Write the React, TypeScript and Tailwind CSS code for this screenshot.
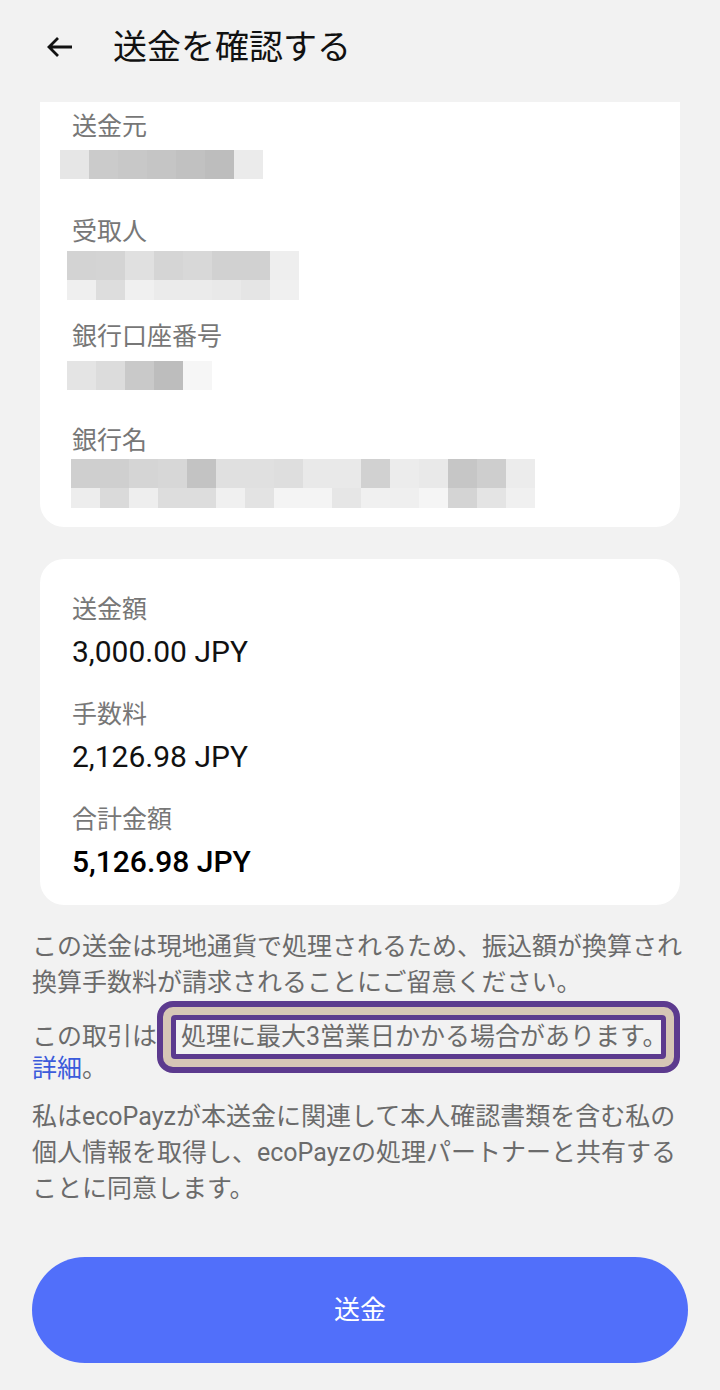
import React from 'react';

type Redaction = { offset: string; gap: string; rows: { h: string; cells: string[] }[] };

const SENDER: Redaction = {
  offset: '-ml-[12px]',
  gap: 'mt-[7px]',
  rows: [
    {
      h: 'h-[29px]',
      cells: ['bg-[#e6e6e6]', 'bg-[#cbcbcb]', 'bg-[#c8c8c8]', 'bg-[#c5c5c5]', 'bg-[#c1c1c1]', 'bg-[#bdbdbd]', 'bg-[#ebebeb]'],
    },
  ],
};

const RECIPIENT: Redaction = {
  offset: '-ml-[5px]',
  gap: 'mt-[3px]',
  rows: [
    {
      h: 'h-[29px]',
      cells: ['bg-[#d3d3d3]', 'bg-[#d4d4d4]', 'bg-[#e0e0e0]', 'bg-[#d5d5d5]', 'bg-[#d8d8d8]', 'bg-[#d1d1d1]', 'bg-[#d1d1d1]', 'bg-[#eeeeee]'],
    },
    {
      h: 'h-[20px]',
      cells: ['bg-[#efefef]', 'bg-[#dddddd]', 'bg-[#f0f0f0]', 'bg-[#ebebeb]', 'bg-[#ebebeb]', 'bg-[#e9e9e9]', 'bg-[#e5e5e5]', 'bg-[#f0f0f0]'],
    },
  ],
};

const ACCOUNT: Redaction = {
  offset: '-ml-[5px]',
  gap: 'mt-[8px]',
  rows: [
    {
      h: 'h-[29px]',
      cells: ['bg-[#e4e4e4]', 'bg-[#dcdcdc]', 'bg-[#c9c9c9]', 'bg-[#bdbdbd]', 'bg-[#f6f6f6]'],
    },
  ],
};

const BANK: Redaction = {
  offset: '-ml-[1px]',
  gap: 'mt-[2px]',
  rows: [
    {
      h: 'h-[29px]',
      cells: [
        'bg-[#cfcfcf]', 'bg-[#cfcfcf]', 'bg-[#d5d5d5]', 'bg-[#d7d7d7]', 'bg-[#c3c3c3]', 'bg-[#e0e0e0]', 'bg-[#e0e0e0]', 'bg-[#dedede]',
        'bg-[#e9e9e9]', 'bg-[#e9e9e9]', 'bg-[#d1d1d1]', 'bg-[#ececec]', 'bg-[#e9e9e9]', 'bg-[#c6c6c6]', 'bg-[#cecece]', 'bg-[#ececec]',
      ],
    },
    {
      h: 'h-[20px]',
      cells: [
        'bg-[#ededed]', 'bg-[#dadada]', 'bg-[#eeeeee]', 'bg-[#dddddd]', 'bg-[#dddddd]', 'bg-[#f0f0f0]', 'bg-[#e3e3e3]', 'bg-[#f4f4f4]',
        'bg-[#f4f4f4]', 'bg-[#e6e6e6]', 'bg-[#f0f0f0]', 'bg-[#efefef]', 'bg-[#f5f5f5]', 'bg-[#d4d4d4]', 'bg-[#e4e4e4]', 'bg-[#f0f0f0]',
      ],
    },
  ],
};

const PARTY_ROWS: { label: string; mt: string; data: Redaction }[] = [
  { label: '送金元', mt: 'mt-0', data: SENDER },
  { label: '受取人', mt: 'mt-[37px]', data: RECIPIENT },
  { label: '銀行口座番号', mt: 'mt-[21px]', data: ACCOUNT },
  { label: '銀行名', mt: 'mt-[35px]', data: BANK },
];

const AMOUNTS = [
  { label: '送金額', value: '3,000.00 JPY', strong: false },
  { label: '手数料', value: '2,126.98 JPY', strong: false },
  { label: '合計金額', value: '5,126.98 JPY', strong: true },
];

function Pixelated({ data }: { data: Redaction }) {
  return (
    <div className={`${data.offset} ${data.gap} flex flex-col`}>
      {data.rows.map((row, i) => (
        <div key={i} className="flex">
          {row.cells.map((c, j) => (
            <div key={j} className={`w-[29px] ${row.h} ${c}`} />
          ))}
        </div>
      ))}
    </div>
  );
}

function BackArrow() {
  return (
    <svg width="26" height="22" viewBox="0 0 26 22" fill="none" className="ml-[47px] shrink-0">
      <path d="M2.5 11H25M11 2L2 11L11 20" stroke="#111" strokeWidth="2.8" strokeLinecap="butt" strokeLinejoin="miter" />
    </svg>
  );
}

export default function App() {
  return (
    <div
      className="min-h-[1390px] bg-[#f2f2f2] pb-[27px]"
      style={{ fontFamily: 'Roboto, "Noto Sans CJK JP", sans-serif' }}
    >
      <header className="h-[94px] flex items-center">
        <BackArrow />
        <h1 className="ml-[40px] text-[34px] leading-[40px] text-[#111]">送金を確認する</h1>
      </header>

      <section className="mx-[40px] mt-[8px] bg-white rounded-b-[24px] pl-[32px] pt-[9px] pb-[19px]">
        {PARTY_ROWS.map((row) => (
          <div key={row.label} className={row.mt}>
            <div className="text-[25px] leading-[32px] text-[#777]">{row.label}</div>
            <Pixelated data={row.data} />
          </div>
        ))}
      </section>

      <section className="mx-[40px] mt-[32px] bg-white rounded-[24px] pl-[32px] pt-[35px] pb-[25px]">
        {AMOUNTS.map((a, i) => (
          <div key={a.label} className={i === 0 ? '' : 'mt-[29px]'}>
            <div className="text-[25px] leading-[32px] text-[#777]">{a.label}</div>
            <div
              className={`mt-[8px] text-[30px] leading-[36px] text-[#111] ${a.strong ? 'font-medium text-black' : ''}`}
            >
              {a.value}
            </div>
          </div>
        ))}
      </section>

      <div className="px-[32px] text-[25px] text-[#6b6b6b]">
        <p className="mt-[24px] leading-[36px]">
          この送金は現地通貨で処理されるため、振込額が換算され換算手数料が請求されることにご留意ください。
        </p>

        <p className="mt-[20px] leading-[32px]">
          この取引は
          <span className="relative inline-block ml-[24px]">
            <span className="absolute -left-[24px] -right-[12px] -top-[20px] -bottom-[20px] rounded-[16px] border-[6px] border-[#5c3a8e] bg-[#d6c6b6] p-[8px]">
              <span className="block h-full rounded-[4px] border-[5px] border-[#5c3a8e] bg-[#f2f2f2]" />
            </span>
            <span className="relative">処理に最大3営業日かかる場合があります。</span>
          </span>
          <span className="text-[#3b5bdb]">詳細</span>。
        </p>

        <p className="mt-[14px] leading-[36px]">
          私はecoPayzが本送金に関連して本人確認書類を含む私の個人情報を取得し、ecoPayzの処理パートナーと共有することに同意します。
        </p>
      </div>

      <div className="px-[32px] mt-[50px]">
        <button
          type="button"
          className="w-full h-[106px] rounded-full bg-[#516ffa] text-white text-[26px] leading-[32px]"
        >
          送金
        </button>
      </div>
    </div>
  );
}
